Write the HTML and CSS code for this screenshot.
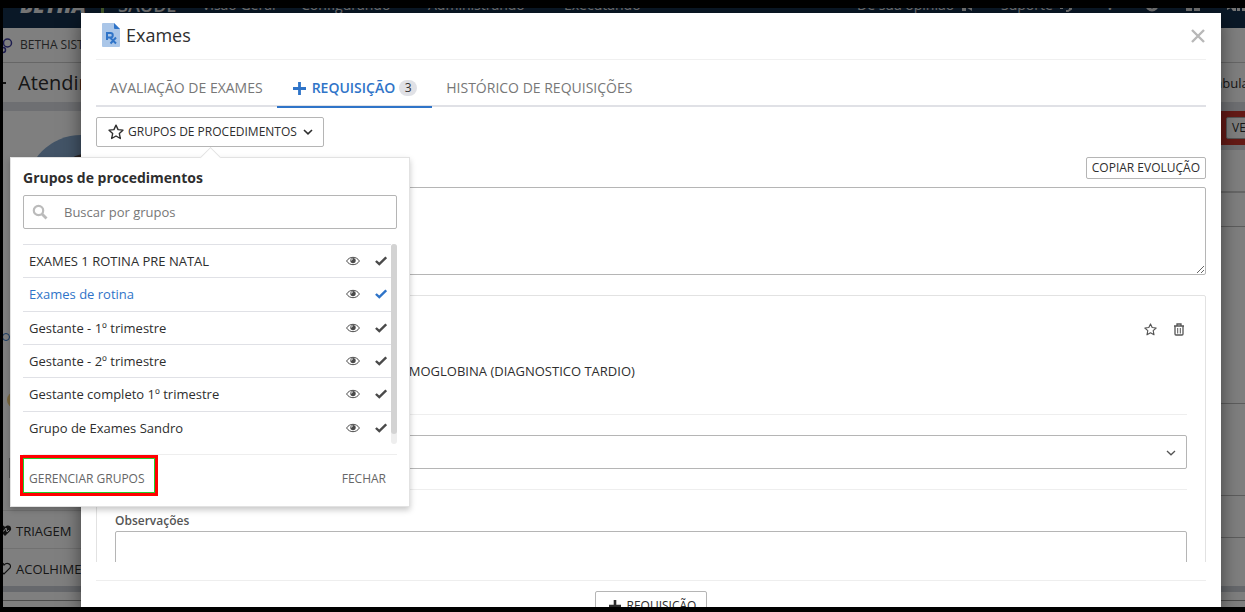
FILE: index.html
```html
<!DOCTYPE html>
<html lang="pt-BR">
<head>
<meta charset="utf-8">
<title>Exames</title>
<link rel="stylesheet" href="styles.css">
</head>
<body>
<svg class="defs" aria-hidden="true">
  <symbol id="eye" viewBox="0 0 14 10"><path d="M.6 5C3.500.1 10.500.1 13.400 5 10.500 9.900 3.500 9.900.6 5Z" fill="none" stroke="currentColor" stroke-width="1"/><circle cx="7" cy="4.600" r="2.700" fill="currentColor"/><path d="M5.300 4.600A1.700 1.700 0 0 1 7 2.900" fill="none" stroke="#fff" stroke-width=".8"/></symbol>
  <symbol id="check" viewBox="0 0 12 10"><path d="M.9 5 4.300 8.200 11.200 1.300" fill="none" stroke="currentColor" stroke-width="2.400"/></symbol>
  <symbol id="star" viewBox="0 0 14 14"><path d="M7 1 8.800 4.900 13.100 5.400 9.900 8.300 10.800 12.700 7 10.500 3.200 12.700 4.100 8.300.9 5.400 5.200 4.900Z" fill="none" stroke="currentColor" stroke-width="1.200" stroke-linejoin="round"/></symbol>
  <symbol id="down" viewBox="0 0 10 6"><path d="M1 1 5 4.800 9 1" fill="none" stroke="currentColor" stroke-width="1.600"/></symbol>
  <symbol id="plus" viewBox="0 0 12 12"><path d="M6 0V12M0 6H12" stroke="currentColor" stroke-width="2.600"/></symbol>
</svg>
<div class="stage">
  <div class="app">
    <nav class="topnav">
      <strong class="brand">BETHA</strong><span class="divider"></span><span class="product">SAÚDE</span>
      <span>Visão Geral</span><span>Configurando</span><span>Administrando</span><span>Executando</span>
      <span class="with-icon">De sua opinião <svg width="14" height="12" viewBox="0 0 14 12"><path d="M1 3H5L12 0V12L6 8V12H2V8H1Z" fill="currentColor"/></svg></span>
      <span class="with-icon">Suporte <svg width="14" height="14" viewBox="0 0 14 14"><path d="M2 9V6A5 5 0 0 1 12 6V11L9 13H7" fill="none" stroke="currentColor" stroke-width="2"/><path d="M1 6H4V11H1ZM10 6H13V11H10Z" fill="currentColor"/></svg></span>
      <strong>?</strong>
      <svg width="14" height="14" viewBox="0 0 14 14"><circle cx="7" cy="7" r="6.500" fill="currentColor"/><path d="M4 7 7 11 10 7Z" fill="#15304f"/></svg>
      <svg width="14" height="12" viewBox="0 0 14 12"><path d="M0 0H6V12H0ZM8 0H14V12H8Z" fill="currentColor"/></svg>
      <svg width="18" height="12" viewBox="0 0 18 12"><path d="M0 8 5 2 9 8V12H6L4 9 0 11ZM10 5H18V12H15V8H13V12H10Z" fill="currentColor"/></svg>
    </nav>
    <div class="entity">
      <svg width="12" height="18" viewBox="0 0 12 18"><circle cx="4.500" cy="7" r="4" fill="none" stroke="#3b3b9e" stroke-width="1.500"/><circle cx="0" cy="14" r="2.500" fill="none" stroke="#3b3b9e" stroke-width="1.500"/></svg>
      <span>BETHA SISTEMAS</span>
    </div>
    <div class="heading"><span class="dash"></span><span class="heading-title">Atendimento</span><span class="place">Ambulatório</span></div>
    <div class="columns">
      <aside class="side">
        <div class="photo">
          <svg width="110" height="110" viewBox="0 0 110 110"><defs><clipPath id="round"><circle cx="55" cy="55" r="55"/></clipPath></defs><g clip-path="url(#round)"><rect width="110" height="110" fill="#86a9cf"/><ellipse cx="64" cy="56" rx="38" ry="38" fill="#5c4a48"/></g></svg>
        </div>
        <div class="marks">
          <svg width="8" height="10" viewBox="0 0 8 10"><circle cx="3" cy="5" r="3.500" fill="none" stroke="#2f74c8"/></svg>
          <svg width="8" height="18" viewBox="0 0 8 18"><circle cx="12" cy="9" r="8" fill="#f4cf7a"/></svg>
          <svg width="8" height="20" viewBox="0 0 8 20"><path d="M7 0V20" stroke="#555" stroke-width="1"/></svg>
        </div>
        <div class="side-item"><svg width="10" height="14" viewBox="0 0 10 14"><path d="M2 12-4 6C-5 1 0 0 2 3 5 0 9 2 8 6Z" fill="#222"/><path d="M-2 7H1L3 4 4 8 6 6" fill="none" stroke="#fff"/></svg>TRIAGEM</div>
        <div class="side-item"><svg width="10" height="14" viewBox="0 0 10 14"><path d="M1 12-5 6C-6 1 0 0 1 3 4 0 9 2 7 6Z" fill="none" stroke="#222" stroke-width="1.200"/></svg>ACOLHIMENTO</div>
      </aside>
      <div class="right">
        <div class="alert"><button class="see" type="button">VER</button></div>
        <div class="cell cell-a"></div><div class="cell cell-b"></div><div class="cell cell-c"></div><div class="cell cell-d"></div><div class="cell cell-e"></div>
      </div>
    </div>
    <div class="app-foot"></div>
  </div>
  <div class="shade"></div>

  <section class="modal" role="dialog" aria-labelledby="modal-title">
    <header class="modal-head">
      <svg width="18" height="24" viewBox="0 0 18 24"><path d="M0 1Q0 0 1 0H12L18 6V23Q18 24 17 24H1Q0 24 0 23Z" fill="#aac6e8"/><path d="M12 0V5Q12 6 13 6H18Z" fill="#2f74c8"/><path d="M5 17V10H8.500A2.200 2.200 0 0 1 8.500 14.500H5M8 14.500 14 20.500M14 14.500 8.500 20.500" fill="none" stroke="#2f74c8" stroke-width="2"/></svg>
      <h1 id="modal-title">Exames</h1>
      <button class="close" type="button" aria-label="Fechar janela"><svg width="14" height="14" viewBox="0 0 14 14"><path d="M1 1 13 13M13 1 1 13" stroke="currentColor" stroke-width="2.400"/></svg></button>
    </header>
    <div class="tabs" role="tablist">
      <button class="tab" role="tab" type="button">AVALIAÇÃO DE EXAMES</button>
      <button class="tab active" role="tab" type="button" aria-selected="true"><svg width="13" height="13"><use href="#plus"/></svg>REQUISIÇÃO<span class="count">3</span></button>
      <button class="tab" role="tab" type="button">HISTÓRICO DE REQUISIÇÕES</button>
    </div>
    <div class="modal-body">
      <button class="btn groups" type="button"><svg width="16" height="16"><use href="#star"/></svg>GRUPOS DE PROCEDIMENTOS<svg class="caret" width="10" height="6"><use href="#down"/></svg></button>
      <div class="copy-row"><button class="btn copy" type="button">COPIAR EVOLUÇÃO</button></div>
      <textarea class="evolution" aria-label="Evolução"></textarea>
      <div class="card">
        <div class="card-actions">
          <button class="icon-btn" type="button" aria-label="Favoritar"><svg width="13" height="13"><use href="#star"/></svg></button>
          <button class="icon-btn" type="button" aria-label="Excluir"><svg width="12" height="13" viewBox="0 0 12 13"><path d="M1 3H11M4 2.500V1H8V2.500M2 3V11Q2 12 3 12H9Q10 12 10 11V3" fill="none" stroke="currentColor" stroke-width="1.300"/><path d="M4.700 5V10.500M7.300 5V10.500" stroke="currentColor" stroke-width="1"/></svg></button>
        </div>
        <p class="exam">HEMOGLOBINA (DIAGNOSTICO TARDIO)</p>
        <div class="select-row"><select class="select" aria-label="Opção"><option></option></select><svg width="10" height="6" viewBox="0 0 10 6"><path d="M1 1 5 4.800 9 1" fill="none" stroke="currentColor" stroke-width="1.300"/></svg></div>
        <label class="obs-label" for="obs">Observações</label>
        <textarea class="obs" id="obs"></textarea>
      </div>
    </div>
    <footer class="modal-foot"><button class="btn add" type="button"><svg width="12" height="12"><use href="#plus"/></svg>REQUISIÇÃO</button></footer>
  </section>

  <section class="popover" aria-labelledby="pop-title">
    <h2 id="pop-title">Grupos de procedimentos</h2>
    <div class="search"><svg width="16" height="16" viewBox="0 0 16 16"><circle cx="6.500" cy="6.500" r="4.700" fill="none" stroke="#bbb" stroke-width="2.200"/><path d="M10 10 14.500 14.500" stroke="#bbb" stroke-width="2.800"/></svg><input type="text" placeholder="Buscar por grupos" aria-label="Buscar por grupos"></div>
    <div class="scroll">
      <ul class="list">
        <li><span>EXAMES 1 ROTINA PRE NATAL</span><svg width="14" height="10"><use href="#eye"/></svg><svg width="12" height="10"><use href="#check"/></svg></li>
        <li class="picked"><span>Exames de rotina</span><svg width="14" height="10"><use href="#eye"/></svg><svg width="12" height="10"><use href="#check"/></svg></li>
        <li><span>Gestante - 1º trimestre</span><svg width="14" height="10"><use href="#eye"/></svg><svg width="12" height="10"><use href="#check"/></svg></li>
        <li><span>Gestante - 2º trimestre</span><svg width="14" height="10"><use href="#eye"/></svg><svg width="12" height="10"><use href="#check"/></svg></li>
        <li><span>Gestante completo 1º trimestre</span><svg width="14" height="10"><use href="#eye"/></svg><svg width="12" height="10"><use href="#check"/></svg></li>
        <li><span>Grupo de Exames Sandro</span><svg width="14" height="10"><use href="#eye"/></svg><svg width="12" height="10"><use href="#check"/></svg></li>
      </ul>
      <div class="track"><div class="thumb"></div></div>
    </div>
    <div class="rule"></div>
    <div class="pop-foot"><button class="manage" type="button">GERENCIAR GRUPOS</button><button class="dismiss" type="button">FECHAR</button></div>
  </section>
</div>
</body>
</html>
```
FILE: styles.css
```css
* { box-sizing: border-box; }
body { margin: 0; height: 100vh; padding: 8px 0 5px 3px; background: #000; font: 13px/18px "Open Sans", sans-serif; color: #2e2e2e; overflow: hidden; }
button, input, textarea, select { font: inherit; color: inherit; }
button { margin: 0; padding: 0; border: 0; background: none; white-space: nowrap; }
svg { display: block; flex: none; }
.defs { position: absolute; width: 0; height: 0; }
.stage { position: relative; height: 100%; overflow: hidden; background: #fff; }

/* Application behind the dialog */
.app { display: flex; flex-direction: column; height: 100%; }
.topnav { display: grid; grid-template-columns: 81px 17px 84px 99px 127px 136px 1fr 144px 106px 38px 41px 41px 18px; align-items: center; flex: none; height: 46px; margin-top: -26px; padding-left: 17px; background: #15304f; color: #e8e8e8; font-size: 14px; white-space: nowrap; }
.brand { font-size: 21px; font-weight: 800; font-style: italic; }
.divider { width: 3px; height: 22px; background: #8db85a; }
.product { font-size: 18px; font-weight: 600; }
.with-icon { display: flex; align-items: center; gap: 6px; }
.entity { display: flex; align-items: center; gap: 5px; flex: none; height: 35px; border-bottom: 1px solid #ccc; color: #444; font-size: 12px; }
.heading { display: flex; align-items: center; flex: none; height: 39px; }
.dash { width: 3px; height: 2px; background: #222; }
.heading-title { flex: 1; padding-left: 12px; font-size: 20px; }
.place { width: 43px; overflow: hidden; white-space: nowrap; }
.columns { display: flex; flex: 1; min-height: 0; border-top: 9px solid #dcdfe5; }
.side { display: flex; flex-direction: column; width: 190px; }
.photo { padding: 24px 0 0 23px; }
.marks { display: flex; flex-direction: column; justify-content: space-between; flex: 1; padding: 87px 0 32px; }
.side-item { display: flex; align-items: center; gap: 3px; flex: none; height: 38px; padding-top: 3px; border-top: 1px solid #e2e2e2; }
.right { display: flex; flex-direction: column; width: 60px; margin-left: auto; }
.alert { flex: none; height: 34px; padding: 6px 0 6px 41px; background: #ca352c; overflow: hidden; }
.see { height: 22px; padding: 0 5px; border: 1px solid #aaa; border-radius: 2px; background: #fff; font-size: 12px; }
.cell { border-bottom: 1px solid #bbb; }
.cell-a { flex: 41; border-top: 5px solid #dcdfe5; border-bottom: 2px solid #ccc; }
.cell-b { flex: 33; }
.cell-c { flex: 176; }
.cell-d { flex: 91; }
.cell-e { flex: 41; }
.right::after { content: ""; flex: 48; }
.app-foot { flex: none; height: 21px; border-top: 6px solid #cdd1d8; border-bottom: 6px solid #fff; box-shadow: inset 0 -1px #999; }
.shade { position: absolute; inset: 0; background: rgba(0, 0, 0, .5); }

/* Dialog */
.modal { position: absolute; inset: 5px 24px 0 78px; display: flex; flex-direction: column; padding: 0 15px; background: #fff; box-shadow: 0 5px 18px rgba(0, 0, 0, .5); }
.modal-head { display: flex; align-items: center; gap: 6px; flex: none; height: 47px; padding: 0 1px 2px 6px; border-bottom: 1px solid #f0f0f0; }
.modal-head h1 { flex: 1; margin: 0; font-size: 18px; line-height: 28px; font-weight: 400; }
.close { padding-top: 2px; color: #b8b8b8; }
.tabs { display: flex; flex: none; height: 47px; margin-bottom: 10px; border-bottom: 2px solid #e0e1e6; }
.tab { display: flex; align-items: center; height: 48px; padding: 8px 14px 0; color: #777; font-size: 14px; }
.tab.active { gap: 6px; padding: 10px 15px 0 16px; border-bottom: 2px solid #2f74c8; color: #2f74c8; font-weight: 600; }
.count { width: 18px; margin-left: -2px; border-radius: 8px; background: #e0e1e6; color: #333; font-size: 12px; line-height: 16px; font-weight: 400; text-align: center; }
.modal-body { flex: 1; min-height: 0; margin-bottom: 18px; overflow: hidden; }
.btn { display: flex; align-items: center; border: 1px solid #b5b5b5; border-radius: 2px; background: #fff; font-size: 12px; }
.groups { height: 30px; padding: 0 10px 0 11px; gap: 4px; }
.caret { margin-left: 2px; }
.copy-row { display: flex; justify-content: flex-end; margin: 10px 0 8px; }
.copy { height: 22px; padding: 0 5px; }
.evolution { display: block; width: 100%; height: 88px; border: 1px solid #b5b5b5; border-radius: 2px; resize: vertical; }
.card { margin-top: 20px; padding: 26px 18px; border: 1px solid #e2e2e2; border-radius: 2px; }
.card-actions { display: flex; justify-content: flex-end; gap: 16px; padding-right: 2px; color: #555; }
.icon-btn { display: flex; align-items: center; height: 15px; }
.exam { margin: 25px 0 34px; padding-left: 277px; }
.select-row { position: relative; padding: 20px 0; border: solid #eee; border-width: 1px 0; }
.select { display: block; width: 100%; height: 34px; padding: 0 10px; border: 1px solid #b5b5b5; border-radius: 2px; background: #fff; appearance: none; }
.select-row svg { position: absolute; right: 11px; top: 35px; color: #555; }
.obs-label { display: block; margin: 22px 0 1px; color: #555; font-size: 12px; font-weight: 600; }
.obs { display: block; width: 100%; height: 80px; border: 1px solid #b5b5b5; border-radius: 2px; }
.modal-foot { display: flex; justify-content: center; align-items: flex-start; flex: none; height: 27px; padding-top: 10px; border-top: 1px solid #eee; overflow: hidden; }
.add { flex: none; height: 30px; padding: 0 10px 0 13px; gap: 6px; }

/* Procedure groups popover */
.popover { position: absolute; left: 7px; top: 149px; width: 400px; padding: 11px 12px 12px; border: 1px solid #e2e2e2; background: #fff; box-shadow: 0 3px 6px rgba(0, 0, 0, .22); }
.popover::before { content: ""; position: absolute; left: 192px; top: -8px; width: 14px; height: 14px; border: solid #e2e2e2; border-width: 1px 0 0 1px; background: #fff; transform: rotate(45deg); }
.popover h2 { margin: 0 0 8px; font-size: 14px; line-height: 18px; font-weight: 700; }
.search { display: flex; align-items: center; gap: 16px; height: 34px; padding: 0 8px; border: 1px solid #b5b5b5; border-radius: 2px; }
.search input { flex: 1; min-width: 0; padding: 0; border: 0; outline: 0; }
.search input::placeholder { color: #777; }
.scroll { display: flex; height: 200px; margin-top: 15px; }
.list { display: flex; flex-direction: column; flex: 1; margin: 0; padding: 0; list-style: none; }
.list li { display: flex; align-items: center; flex: 1; padding: 0 4px 0 6px; border-top: 1px solid #e0e1e6; }
.list span { flex: 1; }
.list svg { color: #4a4a4a; }
.list svg + svg { margin-left: 15px; }
.list .picked span, .list .picked svg + svg { color: #2f74c8; }
.track { width: 6px; border-radius: 3px; background: #eee; }
.thumb { height: 95%; border-radius: 3px; background: #d3d3d3; }
.rule { margin-top: 10px; border-top: 1px solid #eee; }
.pop-foot { display: flex; justify-content: space-between; align-items: center; margin: 0 0 -2px -3px; color: #666; font-size: 12px; }
.manage { height: 41px; padding: 6px 10px 0 6px; border: 3px solid #f00; box-shadow: inset 0 0 0 1px #20d030; }
.dismiss { padding: 6px 11px 0 0; }
```
